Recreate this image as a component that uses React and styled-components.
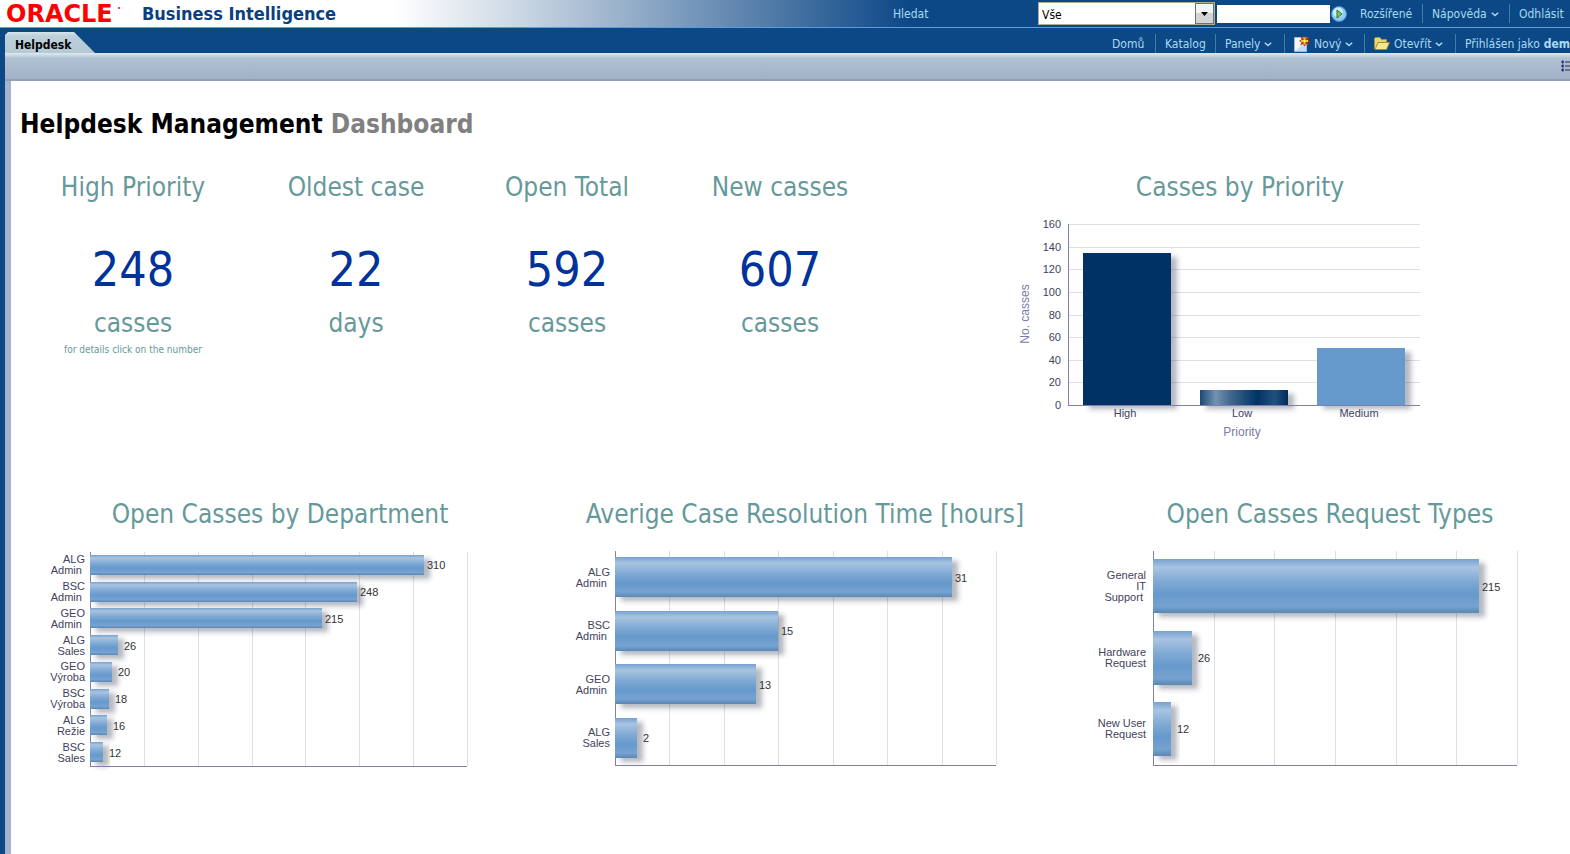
import React from "react";
import styled, { createGlobalStyle } from "styled-components";

const ui = '"DejaVu Sans Condensed", "DejaVu Sans", "Noto Sans", sans-serif';
const chartFont = '"Liberation Sans", Arial, sans-serif';

const GlobalStyle = createGlobalStyle`
  * { box-sizing: border-box; }
  html, body, #root { height: 100%; }
  body {
    margin: 0;
    background: #fff;
    font-family: ${ui};
    font-stretch: condensed;
    overflow-x: hidden;
  }
  button, select, input { font: inherit; }
`;

const Page = styled.div`
  min-height: 100%;
  display: flex;
  flex-direction: column;
`;

const TopArea = styled.div`
  flex: none;
  background: #0c4786;
`;

const BrandBar = styled.header`
  display: flex;
  align-items: center;
  justify-content: space-between;
  height: 28px;
  padding-left: 6px;
  border-bottom: 1px solid #5c9ae2;
  background: linear-gradient(to right, #fff 0, #fff 25%, #d3dde8 32%, #0c4786 58%);
`;

const Brand = styled.div`
  display: flex;
  align-items: center;
  gap: 20px;
`;

const OracleLogo = styled.svg`
  display: block;
  width: 116px;
  height: 26px;
  overflow: visible;
`;

const ProductName = styled.div`
  font-size: 18px;
  font-weight: bold;
  line-height: 26px;
  color: #0b3f80;
  white-space: nowrap;
`;

const Search = styled.form`
  display: flex;
  align-items: center;
  height: 27px;
  font-size: 12px;
  color: #a9dcf0;
`;

const SearchLabel = styled.label`
  width: 145px;
`;

const SelectBox = styled.div`
  position: relative;
  width: 177px;
  height: 23px;
  border: 1px solid #b0ac98;
  background: #fff;
`;

const Scope = styled.select`
  appearance: none;
  width: 100%;
  height: 21px;
  padding: 2px 20px 0 3px;
  border: 0;
  border-radius: 0;
  background: transparent;
  color: #000;
`;

const SelectArrow = styled.span`
  position: absolute;
  top: 0;
  right: 0;
  display: flex;
  align-items: center;
  justify-content: center;
  width: 19px;
  height: 21px;
  border: 1px solid #707070;
  background: linear-gradient(#f4f4f4 50%, #d4d4d4 50%);
  pointer-events: none;
`;

const Query = styled.input`
  width: 113px;
  height: 18px;
  margin: 0 1px 0 2px;
  padding: 0 2px;
  border: 0;
  background: #fff;
`;

const GoButton = styled.button`
  display: block;
  width: 16px;
  height: 18px;
  margin-right: 3px;
  padding: 0;
  border: 0;
  background: none;
  svg { display: block; }
`;

const NavBar = styled.div`
  display: flex;
  justify-content: space-between;
  height: 25px;
  padding-left: 5px;
  background: #0c4786;
`;

const Tab = styled.a`
  align-self: flex-end;
  width: 90px;
  height: 21px;
  padding-left: 10px;
  background: linear-gradient(#d5e5ea, #bdd1db 4px, #b4c9d5);
  clip-path: polygon(0 3px, 3px 0, calc(100% - 21px) 0, 100% 100%, 0 100%);
  color: #000;
  font-size: 12px;
  font-weight: bold;
  line-height: 26px;
  text-decoration: none;
`;

const Menu = styled.nav`
  display: flex;
  align-items: flex-end;
  font-size: 12px;
`;

const Divided = styled.span`
  display: flex;
  align-items: center;
  gap: 4px;
  flex: none;
  width: ${(p) => p.$width}px;
  height: 19px;
  padding-left: 9px;
  border-left: 1px solid ${(p) => (p.$first ? "transparent" : "#3f7fa5")};
  color: #a9dcf0;
  white-space: nowrap;
  svg { flex: none; }
`;

const MenuLink = styled.a`
  color: inherit;
  text-decoration: none;
`;

const MenuButton = styled.button`
  display: flex;
  align-items: center;
  gap: 4px;
  padding: 0;
  border: 0;
  background: none;
  color: inherit;
`;

const PageBar = styled.div`
  display: flex;
  align-items: center;
  justify-content: flex-end;
  height: 28px;
  margin-left: 5px;
  border-bottom: 2px solid #909eb7;
  background: linear-gradient(#dfebf1, #b0c2d1 5px, #a2b0c8);
`;

const OptionsButton = styled.button`
  width: 9px;
  height: 13px;
  padding: 0;
  border: 0;
  background: none;
  overflow: hidden;
  svg { display: block; }
`;

const Frame = styled.div`
  display: flex;
  flex: 1;
  border-left: 5px solid #0c4786;
`;

const Content = styled.main`
  flex: 1;
  min-width: 0;
  padding: 27px 0 24px;
  border-left: 6px solid #a5b3cc;
  background: #fff;
`;

const Title = styled.h1`
  margin: 0 0 31px 9px;
  font-size: 26px;
  line-height: 32px;
  color: #000;
`;

const Muted = styled.span`
  color: #808080;
`;

const Summary = styled.section`
  display: grid;
  grid-template-columns: 222fr 224fr 198fr 228fr 676fr;
  height: 327px;
  padding-left: 11px;
`;

const Kpi = styled.div`
  text-align: center;
  color: #66999a;
`;

const Heading = styled.h2`
  margin: 0;
  font-size: 26px;
  font-weight: normal;
  line-height: 32px;
  text-align: center;
  white-space: nowrap;
  color: #66999a;
`;

const KpiNumber = styled.a`
  display: block;
  margin-top: 36px;
  font-size: 48px;
  line-height: 60px;
  color: #003399;
  text-decoration: none;
`;

const Unit = styled.div`
  margin-top: 8px;
  font-size: 26px;
  line-height: 32px;
`;

const Note = styled.div`
  font-size: 10px;
  line-height: 22px;
`;

const PriorityPanel = styled.div`
  display: flex;
  flex-direction: column;
  align-items: center;
  padding-left: 16px;
`;

const Breakdown = styled.section`
  display: flex;
  justify-content: space-between;
  padding-left: 29px;
`;

const Panel = styled.div`
  flex: none;
  width: 480px;
`;

const Chart = styled.svg`
  display: block;
  margin-top: ${(p) => p.$gap || 0}px;
  font-family: ${chartFont};
  font-size: 11px;
  fill: #42425c;
  overflow: visible;
`;

const AxisTitle = styled.text`
  font-size: 12px;
  fill: #7b7ba6;
`;

const Chevron = () => (
  <svg width="8" height="6" viewBox="0 0 8 6" fill="none" stroke="#a9dcf0" strokeWidth="1.5">
    <path d="M0.8 1.8 L4 4.600 L7.2 1.8" />
  </svg>
);

const NewIcon = () => (
  <svg width="16" height="16" viewBox="0 0 16 16">
    <path d="M0.500 1.500H12.500V15.500H0.500Z" fill="#f3f5fd" stroke="#a9b3d4" />
    <path d="M1 15L12 6V15Z" fill="#cfd8ee" />
    <path d="M10.500 0L12 2L15 0.500L14 3.500L16 5L14 6.500L15 9.500L12 8L10.500 10.500L9 8L6 9.500L7.500 6.500L5 5L7.500 3.500L6.500 0.500L9.300 2Z" fill="#a33d12" />
    <path d="M10.500 1.500V8.500M7 5H14" stroke="#ffc526" strokeWidth="2" />
    <circle cx="10.500" cy="5" r="1" fill="#fff3b0" />
  </svg>
);

const FolderIcon = () => (
  <svg width="16" height="13" viewBox="0 0 16 13">
    <path d="M0.500 12V1.500L1.500 .5H6L7.500 2.500H12.500V5.500" fill="#e4d67c" stroke="#a8963c" />
    <path d="M1 12.500L4 5.500H15.500L12.500 12.500Z" fill="#f3e78f" stroke="#a28f31" />
  </svg>
);

const OptionsIcon = () => (
  <svg width="16" height="13" viewBox="0 0 16 13">
    {[2, 6, 10].map((y) => (
      <g key={y}>
        <path d={`M0 ${y}L2 ${y - 2}L3 ${y}L2 ${y + 2}Z`} fill="#29298c" />
        <path d={`M4 ${y}H15`} stroke="#555b72" strokeWidth="1.5" />
      </g>
    ))}
  </svg>
);

const GoIcon = () => (
  <svg width="16" height="18" viewBox="0 0 16 18">
    <circle cx="8" cy="9" r="7.500" fill="#8fc9f0" stroke="#3f8bce" />
    <circle cx="7" cy="7.500" r="5" fill="#cdebfb" />
    <path d="M6 5L11 9L6 13Z" fill="#7ccb55" stroke="#2d7429" />
  </svg>
);

function MenuEntry({ label, icon, first, width, menu = true }) {
  return (
    <Divided $first={first} $width={width}>
      {icon}
      {menu ? (
        <MenuButton type="button">
          {label}
          <Chevron />
        </MenuButton>
      ) : (
        <MenuLink href="#">{label}</MenuLink>
      )}
    </Divided>
  );
}

function Shadow({ id }) {
  return (
    <filter id={id} x="-50%" y="-60%" width="200%" height="260%">
      <feDropShadow dx="6" dy="4" stdDeviation="2.500" floodColor="#28324b" floodOpacity="0.35" />
    </filter>
  );
}

function RowChart({ id, title, axis, width, ticks, scale, rows, gap, labelGap = 5 }) {
  const height = 214;
  const band = height / rows.length;
  const bar = Math.round(band * 0.75);
  return (
    <Chart width="480" height="220" $gap={gap} role="img" aria-label={title}>
      <defs>
        <linearGradient id={`${id}-fill`} x1="0" y1="0" x2="0" y2="1">
          <stop offset="0" stopColor="#76a2d0" />
          <stop offset="0.150" stopColor="#a9c4e1" />
          <stop offset="0.400" stopColor="#82abd5" />
          <stop offset="0.650" stopColor="#6599cc" />
          <stop offset="0.870" stopColor="#76a3d1" />
          <stop offset="1" stopColor="#5a87b4" />
        </linearGradient>
        <Shadow id={`${id}-shadow`} />
        <clipPath id={`${id}-clip`}>
          <rect x={axis} y="-5" width="440" height="232" />
        </clipPath>
      </defs>
      {Array.from({ length: ticks }, (_, i) => {
        const x = axis + Math.round((width * (i + 1)) / ticks);
        return <rect key={i} x={x} y="0" width="1" height={height} fill="#dedee7" />;
      })}
      <rect x={axis} y="0" width="1" height={height} fill="#8080a8" />
      <g clipPath={`url(#${id}-clip)`}>
        {rows.map(([, value], i) => (
          <rect
            key={i}
            x={axis}
            y={Math.floor(band * i + band * 0.125)}
            width={Math.round(value * scale)}
            height={bar}
            fill={`url(#${id}-fill)`}
            filter={`url(#${id}-shadow)`}
          />
        ))}
      </g>
      <rect x={axis} y={height} width={width} height="1" fill="#8080a8" />
      {rows.map(([lines, value], i) => {
        const middle = Math.round(band * (i + 0.5));
        const end = axis + Math.round(value * scale);
        return (
          <g key={i}>
            {lines.map((line, n) => (
              <text key={n} x={axis - labelGap} y={middle + 3 + Math.round(11 * (n - (lines.length - 1) / 2))} textAnchor="end">
                {line}
              </text>
            ))}
            <text x={end + (value * scale < 50 ? 6 : 3)} y={middle + 4} fill="#333">
              {value}
            </text>
          </g>
        );
      })}
    </Chart>
  );
}

const priorities = [
  ["High", 134, "#003366"],
  ["Low", 13, "url(#low-fill)"],
  ["Medium", 50, "#6699cc"],
];

function PriorityChart() {
  const left = 58;
  const top = 9;
  const unit = 181 / 160;
  return (
    <Chart width="460" height="230" $gap={12} role="img" aria-label="Casses by Priority">
      <defs>
        <linearGradient id="low-fill">
          <stop offset="0" stopColor="#1c4a78" />
          <stop offset="0.180" stopColor="#7492b1" />
          <stop offset="0.350" stopColor="#41678f" />
          <stop offset="0.650" stopColor="#003366" />
          <stop offset="0.850" stopColor="#21517f" />
          <stop offset="1" stopColor="#002c5c" />
        </linearGradient>
        <Shadow id="priority-shadow" />
      </defs>
      {[160, 140, 120, 100, 80, 60, 40, 20, 0].map((v) => {
        const y = top + Math.round((160 - v) * unit);
        return (
          <g key={v}>
            {v > 0 && <rect x={left} y={y} width="352" height="1" fill="#dedee7" />}
            <text x={left - 7} y={y + 4} textAnchor="end">{v}</text>
          </g>
        );
      })}
      {priorities.map(([name, value, fill], i) => {
        const h = Math.round(value * unit);
        return (
          <g key={name}>
            <rect x={left + 15 + 117 * i} y={top + 181 - h} width="88" height={h} fill={fill} filter="url(#priority-shadow)" />
            <text x={left + 57 + 117 * i} y={top + 193} textAnchor="middle">{name}</text>
          </g>
        );
      })}
      <rect x={left} y={top} width="1" height="182" fill="#8080a8" />
      <rect x={left} y={top + 181} width="352" height="1" fill="#8080a8" />
      <AxisTitle x={left + 174} y={top + 212} textAnchor="middle">Priority</AxisTitle>
      <AxisTitle transform="translate(19 99) rotate(-90)" textAnchor="middle">No. casses</AxisTitle>
    </Chart>
  );
}

const kpis = [
  ["High Priority", 248, "casses", "for details click on the number"],
  ["Oldest case", 22, "days"],
  ["Open Total", 592, "casses"],
  ["New casses", 607, "casses"],
];

const departments = [
  [["ALG", "Admin\u00a0"], 310],
  [["BSC", "Admin\u00a0"], 248],
  [["GEO", "Admin\u00a0"], 215],
  [["ALG", "Sales"], 26],
  [["GEO", "Výroba"], 20],
  [["BSC", "Výroba"], 18],
  [["ALG", "Režie"], 16],
  [["BSC", "Sales"], 12],
];

const resolution = [
  [["ALG", "Admin\u00a0"], 31],
  [["BSC", "Admin\u00a0"], 15],
  [["GEO", "Admin\u00a0"], 13],
  [["ALG", "Sales"], 2],
];

const requests = [
  [["General", "IT", "Support\u00a0"], 215],
  [["Hardware", "Request"], 26],
  [["New User", "Request"], 12],
];

export default function App() {
  return (
    <Page>
      <GlobalStyle />
      <TopArea>
        <BrandBar>
          <Brand>
            <OracleLogo role="img" aria-label="Oracle">
              <text x="0" y="21" fontSize="24" fontWeight="bold" fontFamily="DejaVu Sans" fontStretch="normal" fill="#f00">ORACLE</text>
              <circle cx="113" cy="7" r="1" fill="#f00" />
            </OracleLogo>
            <ProductName>Business Intelligence</ProductName>
          </Brand>
          <Search onSubmit={(e) => e.preventDefault()}>
            <SearchLabel htmlFor="query">Hledat</SearchLabel>
            <SelectBox>
              <Scope aria-label="Rozsah" defaultValue="Vše">
                <option>Vše</option>
              </Scope>
              <SelectArrow>
                <svg width="7" height="4" viewBox="0 0 7 4"><path d="M0 0H7L3.500 4Z" /></svg>
              </SelectArrow>
            </SelectBox>
            <Query id="query" type="text" />
            <GoButton type="submit" aria-label="Hledat"><GoIcon /></GoButton>
            <MenuEntry label="Rozšířené" first width={72} menu={false} />
            <MenuEntry label="Nápověda" width={87} />
            <MenuEntry label="Odhlásit" width={61} menu={false} />
          </Search>
        </BrandBar>
        <NavBar>
          <Tab href="#">Helpdesk</Tab>
          <Menu>
            <MenuEntry label="Domů" first width={53} menu={false} />
            <MenuEntry label="Katalog" width={60} menu={false} />
            <MenuEntry label="Panely" width={69} />
            <MenuEntry label="Nový" icon={<NewIcon />} width={80} />
            <MenuEntry label="Otevřít" icon={<FolderIcon />} width={91} />
            <Divided $width={115}>
              Přihlášen jako <b>dem</b>
            </Divided>
          </Menu>
        </NavBar>
        <PageBar>
          <OptionsButton type="button" aria-label="Možnosti stránky"><OptionsIcon /></OptionsButton>
        </PageBar>
      </TopArea>
      <Frame>
        <Content>
          <Title>Helpdesk Management <Muted>Dashboard</Muted></Title>
          <Summary>
            {kpis.map(([name, value, unit, note]) => (
              <Kpi key={name}>
                <Heading>{name}</Heading>
                <KpiNumber href="#">{value}</KpiNumber>
                <Unit>{unit}</Unit>
                {note && <Note>{note}</Note>}
              </Kpi>
            ))}
            <PriorityPanel>
              <Heading>Casses by Priority</Heading>
              <PriorityChart />
            </PriorityPanel>
          </Summary>
          <Breakdown>
            <Panel>
              <Heading>Open Casses by Department</Heading>
              <RowChart id="department" title="Open Casses by Department" gap={22} axis={50} width={377} ticks={7} scale={1.077} rows={departments} />
            </Panel>
            <Panel>
              <Heading>Averige Case Resolution Time [hours]</Heading>
              <RowChart id="resolution" title="Averige Case Resolution Time" gap={21} axis={50} width={381} ticks={7} scale={10.87} rows={resolution} />
            </Panel>
            <Panel>
              <Heading>Open Casses Request Types</Heading>
              <RowChart id="requests" title="Open Casses Request Types" gap={21} axis={63} width={364} ticks={6} scale={1.516} rows={requests} labelGap={7} />
            </Panel>
          </Breakdown>
        </Content>
      </Frame>
    </Page>
  );
}
